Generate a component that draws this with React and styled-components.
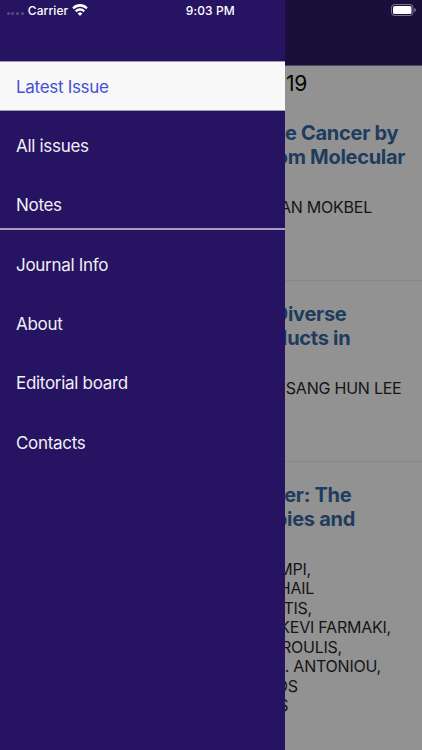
import React from 'react'
import styled, { createGlobalStyle } from 'styled-components';

const mainMenu = ['Latest Issue', 'All issues', 'Notes'];
const infoMenu = ['Journal Info', 'About', 'Editorial board', 'Contacts'];

// end: where each line of text stops, measured from the left of the page
const articles = [
  {
    title: [{ text: 'e Cancer by', end: 398.2 }, { text: 'om Molecular', end: 405.2 }],
    authors: [{ text: 'AN MOKBEL', end: 372 }],
  },
  {
    title: [{ text: 'Diverse', end: 346.5 }, { text: 'ducts in', end: 350.4 }],
    authors: [{ text: 'SANG HUN LEE', end: 401.5 }],
  },
  {
    title: [{ text: 'er: The', end: 351.4 }, { text: 'pies and', end: 355 }],
    authors: [
      { text: 'MPI,', end: 311 },
      { text: 'HAIL', end: 314.2 },
      { text: 'TIS,', end: 312 },
      { text: 'KEVI FARMAKI,', end: 391 },
      { text: 'ROULIS,', end: 342 },
      { text: '. ANTONIOU,', end: 381 },
      { text: 'OS', end: 297.7 },
      { text: 'S', end: 288.3 },
    ],
  },
];

function StatusBar() {
  return (
    <Status>
      <Signal><i /><i /><i /><i /></Signal>
      <Carrier>Carrier</Carrier>
      <svg width="16" height="12" viewBox="0.6 0.2 14.8 10.3" preserveAspectRatio="none" fill="#fff">
        <path d="M8 2.5c2.2 0 4.2.85 5.7 2.25l1.25-1.3a.3.3 0 0 0 0-.4A10.1 10.1 0 0 0 8 .3C5.3.3 2.9 1.35 1.05 3.05a.3.3 0 0 0 0 .4l1.25 1.3A8.3 8.3 0 0 1 8 2.5z" />
        <path d="M8 6.1c1.2 0 2.3.45 3.15 1.2l1.3-1.3a.3.3 0 0 0 0-.4A6.6 6.6 0 0 0 8 3.9c-1.7 0-3.25.65-4.45 1.7a.3.3 0 0 0 0 .4l1.3 1.3A4.75 4.75 0 0 1 8 6.1z" />
        <path d="M9.95 8.5a.3.3 0 0 0 0-.45 3 3 0 0 0-3.9 0 .3.3 0 0 0 0 .45l1.75 1.75a.3.3 0 0 0 .4 0z" />
      </svg>
      <Clock>9:03 PM</Clock>
      <svg width="26" height="12" viewBox="0 0 26 12">
        <rect x="0.5" y="0.5" width="21.5" height="11" rx="3" fill="none" stroke="#fff" strokeOpacity="0.42" />
        <rect x="2" y="2" width="18.5" height="8" rx="1.6" fill="#fff" />
        <path d="M23.4 4v4c.8-.3 1.4-1.1 1.4-2s-.6-1.7-1.4-2z" fill="#fff" fillOpacity="0.5" />
      </svg>
    </Status>
  )
}

function Article({ title, authors }) {
  return (
    <Card>
      {title.map(line => <TitleLine key={line.text} $end={line.end}>{line.text}</TitleLine>)}
      <Authors>
        {authors.map(line => <AuthorLine key={line.text} $end={line.end}>{line.text}</AuthorLine>)}
      </Authors>
    </Card>
  )
}

function App() {
  return (
    <Screen>
      <GlobalStyle />
      <Header />
      <IssueDate>19</IssueDate>
      {articles.map((article, i) => <Article key={i} {...article} />)}
      <Drawer>
        {mainMenu.map((name, i) => <MenuItem key={name} $active={i === 0}>{name}</MenuItem>)}
        <Separator />
        {infoMenu.map(name => <MenuItem key={name}>{name}</MenuItem>)}
      </Drawer>
      <StatusBar />
    </Screen>
  )
}

const GlobalStyle = createGlobalStyle`
  * {
    box-sizing: border-box;
  }
  body {
    margin: 0;
    font-family: Inter, "Liberation Sans", sans-serif;
  }
`;
const Screen = styled.div`
  position: relative;
  width: 422px;
  height: 750px;
  overflow: hidden;
  background: #929292;
`;
const Header = styled.div`
  height: 66px;
  background: #190f3a;
  border-bottom: 1px solid #4c4660;
`;
const Line = styled.div`
  width: ${props => props.$end}px;
  text-align: right;
  white-space: nowrap;
`;
const IssueDate = styled.div`
  width: 307.2px;
  height: 34px;
  line-height: 36px;
  font-size: 21px;
  letter-spacing: -0.2px;
  text-align: right;
  color: #050505;
`;
const Card = styled.div`
  min-height: 181px;
  padding: 21px 0 62px;
  border-bottom: 1px solid #86868b;
`;
const TitleLine = styled(Line)`
  font-size: 20px;
  font-weight: 700;
  line-height: 24px;
  letter-spacing: -0.28px;
  color: #1d3c5e;
`;
const Authors = styled.div`
  margin-top: 29px;
`;
const AuthorLine = styled(Line)`
  font-size: 16px;
  line-height: 19.45px;
  letter-spacing: -0.23px;
  color: #151515;
`;
const Drawer = styled.div`
  position: absolute;
  top: 0;
  left: 0;
  width: 285.3px;
  height: 100%;
  padding-top: 61px;
  background: #261462;
`;
const MenuItem = styled.div`
  height: 50px;
  margin-bottom: 9.1px;
  padding-left: 16px;
  line-height: 50px;
  font-size: 17px;
  letter-spacing: -0.3px;
  color: ${props => props.$active ? '#4252d6' : '#f1eff6'};
  background: ${props => props.$active ? '#f8f8f8' : 'transparent'};
  border: solid ${props => props.$active ? '#a39bb9' : 'transparent'};
  border-width: 1px 0;
`;
const Separator = styled.div`
  height: 2px;
  margin: -10.3px 0 9.3px;
  background: #a59dbf;
`;
const Status = styled.div`
  position: absolute;
  top: 0;
  left: 0;
  display: flex;
  align-items: center;
  width: 422px;
  height: 20.5px;
  padding: 0 5px 0 6px;
  font-size: 12px;
  font-weight: 500;
  color: #fff;
`;
const Signal = styled.div`
  display: flex;
  gap: 1.5px;
  margin: 7px 4px 0 0.5px;
  & > i {
    width: 3.2px;
    height: 3.2px;
    border-radius: 50%;
    background: #5a4c87;
  }
`;
const Carrier = styled.span`
  width: 44.5px;
  letter-spacing: 0.1px;
`;
const Clock = styled.span`
  flex: 1;
  margin-left: 97.5px;
  letter-spacing: 0.1px;
`;
export default App;
